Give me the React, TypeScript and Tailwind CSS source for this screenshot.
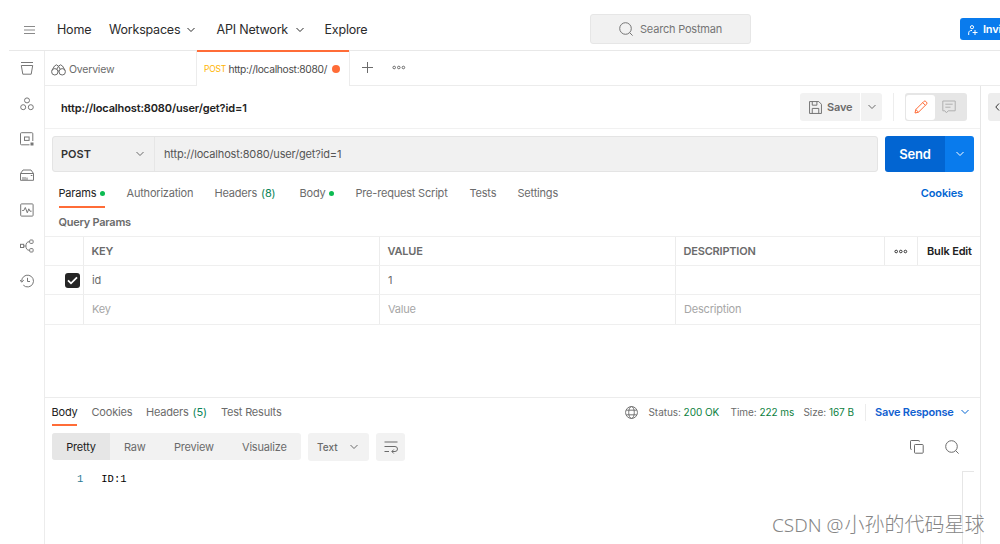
import type { ReactNode } from "react";
import clsx from "clsx";

type IconProps = { size?: number; className?: string; children: ReactNode };

function Icon({ size = 14, className, children }: IconProps) {
  return (
    <svg
      width={size}
      height={size}
      viewBox="0 0 14 14"
      fill="none"
      stroke="currentColor"
      strokeWidth="1"
      className={clsx("block shrink-0", className)}
    >
      {children}
    </svg>
  );
}

function Chevron({ className }: { className?: string }) {
  return (
    <svg width="8" height="6" viewBox="0 0 8 6" fill="none" stroke="currentColor" className={clsx("block shrink-0", className)}>
      <path d="M0.5 1 4 4.5 7.5 1" />
    </svg>
  );
}

function Dots({ className }: { className?: string }) {
  return (
    <svg width="14" height="5" viewBox="0 0 14 5" fill="none" stroke="currentColor" className={clsx("block shrink-0", className)}>
      <circle cx="2.2" cy="2.5" r="1.3" />
      <circle cx="6.8" cy="2.5" r="1.3" />
      <circle cx="11.4" cy="2.5" r="1.3" />
    </svg>
  );
}

function SearchIcon({ className }: { className?: string }) {
  return (
    <Icon className={className}>
      <circle cx="6.5" cy="6.5" r="5.8" />
      <path d="m10.6 10.6 3 3" />
    </Icon>
  );
}

const sidebar = [
  // collections
  <Icon>
    <path d="M1 1.5h12M1.300 4.500h11.400l-1.500 8.700H2.800z" />
  </Icon>,
  // apis
  <Icon>
    <circle cx="7" cy="3.4" r="2.5" />
    <circle cx="3.2" cy="10.2" r="2.5" />
    <circle cx="10.8" cy="10.2" r="2.5" />
  </Icon>,
  // environments
  <Icon>
    <path d="M9.5 12.8H1.5a1 1 0 0 1-1-1V1.7a1 1 0 0 1 1-1h10.3a1 1 0 0 1 1 1V9" />
    <rect x="4.5" y="5" width="4.6" height="3.4" />
    <rect x="11" y="11" width="2" height="2" fill="currentColor" />
  </Icon>,
  // mock servers
  <Icon>
    <path d="M.5 5.5 3 2h8l2.500 3.500M.5 5.500h13v6.800H.5zM3 9v3M5 9v3M7 9.500v2.500M10.800 7.500h1.600" />
  </Icon>,
  // monitors
  <Icon>
    <rect x=".7" y=".9" width="12.4" height="12.2" rx=".8" />
    <path d="M2.2 7.5h1.6l1.5-3 2 5.3 1.5-4 1.2 2.4h1.6" />
  </Icon>,
  // flows
  <Icon>
    <rect x=".5" y="5.3" width="3.2" height="3.2" />
    <rect x="9.7" y="1" width="3.4" height="3.4" rx=".8" />
    <rect x="9.7" y="9.6" width="3.4" height="3.4" rx=".8" />
    <path d="M3.7 7h2M9.5 2.7C7 2.7 5.9 4.3 5.9 7s1.1 4.3 3.6 4.3" />
  </Icon>,
  // history
  <Icon>
    <path d="M1.7 7.5A5.9 5.9 0 1 1 3.3 11.1M0 6l1.7 2.2L3.8 6.2M7.5 3.8V7.5H10" />
  </Icon>,
];

const requestTabs = [
  { name: "Params", width: "w-[68px]", dot: true, active: true },
  { name: "Authorization", width: "w-[88px]" },
  { name: "Headers", width: "w-[85px]", count: "(8)" },
  { name: "Body", width: "w-[56px]", dot: true },
  { name: "Pre-request Script", width: "w-[114px]" },
  { name: "Tests", width: "w-[48px]" },
  { name: "Settings", width: "w-[60px]" },
];

const responseTabs = [
  { name: "Body", width: "w-[40px]", active: true },
  { name: "Cookies", width: "w-[54.5px]" },
  { name: "Headers", width: "w-[75px]", count: "(5)" },
  { name: "Test Results", width: "w-[80px]" },
];

function Header() {
  return (
    <header className="flex h-[51px] shrink-0 items-start border-b border-[#e8e8e8] text-[12.5px] text-[#2b2b2b]">
      <div className="flex h-[58px] w-[48px] shrink-0 items-center pl-[15px] text-[#8a8a8a]">
        <svg width="11" height="8" viewBox="0 0 11 8" stroke="currentColor" className="mt-px">
          <path d="M0 .5h11M0 4h11M0 7.5h11" />
        </svg>
      </div>
      <nav className="flex h-[59px] w-[533px] shrink-0 items-center">
        <span className="w-[52px]">Home</span>
        <span className="w-[78px]">Workspaces</span>
        <Chevron className="mr-[21.5px]" />
        <span className="w-[79px]">API Network</span>
        <Chevron className="mr-[21px]" />
        <span>Explore</span>
      </nav>
      <div className="mt-[14px] flex h-[30px] w-[161px] shrink-0 items-center rounded-[3px] border border-[#e6e6e6] bg-[#f1f1f1] pb-px pl-[28px] text-[11px] text-[#757575]">
        <SearchIcon className="mr-[7px]" />
        Search Postman
      </div>
      <button className="mt-[18px] ml-[209px] flex h-[22px] w-[70px] shrink-0 items-center rounded-[3px] bg-[#097bed] pl-[8px] text-[11px] font-semibold text-white">
        <svg width="10" height="10" viewBox="0 0 10 10" fill="none" stroke="currentColor" className="mt-px mr-[5px]">
          <circle cx="4" cy="2.2" r="1.6" />
          <path d="M.7 10V7.8C.7 6.2 2 5.5 4 5.5M7 5v5M4.6 7.5H9.5" />
        </svg>
        Invite
      </button>
    </header>
  );
}

function TabBar() {
  return (
    <div className="flex h-[35px] text-[10.5px] text-[#6b6b6b]">
      <div className="flex w-[152px] items-center border-r border-b border-[#ececec] pt-[3px] pl-[6px]">
        <svg width="15" height="12" viewBox="0 0 15 12" fill="none" stroke="currentColor" className="mr-[3px]">
          <circle cx="3.8" cy="7.8" r="3.2" />
          <circle cx="11.2" cy="7.8" r="3.2" />
          <path d="M.9 6.500 3.500 2 5.500.8 7.500 2.200 9.500.8l2 1.200 2.600 4.500M7.500 2.200 5.800 5.300M7.500 2.200l1.700 3.100M6.800 7h1.400" />
        </svg>
        Overview
      </div>
      <div className="-mt-px flex w-[152px] items-center border-t-2 border-[#ff6c37] pl-[7px] text-[#4a4a4a]">
        <span className="w-[24.5px] text-[8.5px] text-[#ffb400]">POST</span>
        <span className="w-[103px] text-[10.25px] tracking-[-0.3px] whitespace-nowrap">http://localhost:8080/</span>
        <span className="size-[8px] rounded-full bg-[#ff6c37]" />
      </div>
      <div className="flex flex-1 items-start border-b border-l border-[#ececec] pt-[11px] pl-[12px]">
        <svg width="11" height="11" viewBox="0 0 11 11" stroke="currentColor" className="mr-[19px]">
          <path d="M5.5 0v11M0 5.5h11" />
        </svg>
        <Dots className="mt-[3px]" />
      </div>
    </div>
  );
}

function TitleRow() {
  return (
    <div className="flex h-[43px] items-center border-b border-[#f1f1f1] pl-[16px] text-[11px]">
      <span className="w-[739px] pt-px font-semibold tracking-[-0.13px] text-[#212121]">http://localhost:8080/user/get?id=1</span>
      <button className="flex h-[28px] w-[60px] items-center rounded-l-[3px] bg-[#f2f2f2] pl-[9px] font-semibold text-[#6b6b6b]">
        <Icon size={13} className="mr-[5px]">
          <path d="M.6.6H10.5L13.4 3.5V13.4H.6zM3.5 13.4V8H10.5V13.4M3.5.6V4.5H8.5V.6" />
        </Icon>
        Save
      </button>
      <button className="ml-px flex h-[28px] w-[21px] items-center justify-center rounded-r-[3px] bg-[#f2f2f2] text-[#6b6b6b]">
        <Chevron />
      </button>
      <div className="ml-[11px] h-[28px] w-px bg-[#ededed]" />
      <div className="ml-[11px] flex h-[28px] w-[62px] items-center rounded-[3px] bg-[#e6e6e6] p-px">
        <div className="flex h-[25px] w-[29px] items-center justify-center rounded-[3px] bg-white text-[#ff6c37]">
          <Icon>
            <path d="M1 13 1.8 9.5 9.8 1.5a1.5 1.5 0 0 1 2.1 0l.6.6a1.5 1.5 0 0 1 0 2.1L4.5 12.2zM8.7 2.6l2.7 2.7M1.8 9.5l2.7 2.7" />
          </Icon>
        </div>
        <div className="flex flex-1 items-center justify-center pr-[3px] text-[#b0b0b0]">
          <Icon>
            <path d="M.8 1h12.4v9.8H6.2l-1.8 2-1.5-2H.8zM3.3 4.2h7.4M3.3 7.2h5.2" />
          </Icon>
        </div>
      </div>
    </div>
  );
}

function RequestBar() {
  return (
    <div className="mt-[7px] flex h-[36px] pl-[7px] text-[11px]">
      <div className="flex w-[826px] shrink-0 items-center rounded-[3px] border border-[#e4e4e4] bg-[#f1f1f1]">
        <div className="flex h-full w-[102px] items-center border-r border-[#e6e6e6] pl-[8px] font-semibold text-[#333]">
          <span className="w-[75px] tracking-normal">POST</span>
          <Chevron className="text-[#6b6b6b]" />
        </div>
        <span className="pl-[9px] tracking-[-0.16px] text-[#555]">http://localhost:8080/user/get?id=1</span>
      </div>
      <button className="ml-[7px] w-[60px] shrink-0 rounded-l-[3px] bg-[#0265d2] text-[13px] font-semibold text-white">Send</button>
      <button className="flex w-[29px] shrink-0 items-center justify-center rounded-r-[3px] bg-[#097bed] text-white">
        <Chevron />
      </button>
    </div>
  );
}

function RequestTabs() {
  return (
    <div className="flex h-[36px] items-start pl-[13.5px] text-[11px] text-[#6b6b6b]">
      {requestTabs.map((tab) => (
        <div key={tab.name} className={clsx("shrink-0 whitespace-nowrap", tab.width)}>
          <div
            className={clsx(
              "inline-flex h-[36px] items-center",
              tab.active ? "border-b-2 border-[#ff6c37] pt-[8px] text-[#212121]" : "pt-[6px]",
            )}
          >
            {tab.name}
            {tab.count && <span className="ml-[4px] text-[#0b8457]">{tab.count}</span>}
            {tab.dot && <span className="ml-[3.5px] size-[5px] rounded-full bg-[#0cbb52]" />}
          </div>
        </div>
      ))}
      <span className="mt-[13px] ml-auto pr-[17px] font-semibold tracking-[-0.15px] text-[#0265d2]">Cookies</span>
    </div>
  );
}

function ParamsTable() {
  const columns = "grid grid-cols-[38px_296px_296px_305px] border-b border-[#efefef]";
  const headCell = "flex items-center border-l border-[#ececec] pl-[7.5px]";
  const cell = "flex items-center border-l border-[#ececec] pl-[8px]";

  return (
    <div className="border-t border-[#efefef] text-[11px]">
      <div className={clsx(columns, "h-[29px] font-semibold text-[#6b6b6b]")}>
        <div />
        <div className={headCell}>KEY</div>
        <div className={headCell}>VALUE</div>
        <div className={headCell}>
          <span className="w-[200.5px] shrink-0">DESCRIPTION</span>
          <div className="flex h-full w-[34px] shrink-0 items-center justify-center border-x border-[#ececec] text-[#333]">
            <Dots />
          </div>
          <span className="pl-[9px] tracking-[-0.15px] whitespace-nowrap text-[#212121]">Bulk Edit</span>
        </div>
      </div>
      <div className={clsx(columns, "h-[29px] text-[#6b6b6b]")}>
        <div className="flex items-center pl-[19.5px]">
          <div className="flex size-[15px] shrink-0 items-center justify-center rounded-[3px] bg-[#262626] text-white">
            <svg width="11" height="9" viewBox="0 0 11 9" fill="none" stroke="currentColor" strokeWidth="1.8">
              <path d="M1 4.3 4 7.3 10 1.3" />
            </svg>
          </div>
        </div>
        <div className={cell}>id</div>
        <div className={cell}>1</div>
        <div className={cell} />
      </div>
      <div className={clsx(columns, "h-[30px] text-[#a6a6a6]")}>
        <div />
        <div className={clsx(cell, "pb-[2px]")}>Key</div>
        <div className={clsx(cell, "pb-[2px]")}>Value</div>
        <div className={clsx(cell, "pb-[2px]")}>Description</div>
      </div>
    </div>
  );
}

function ResponsePanel() {
  return (
    <section className="mt-[72px] flex flex-1 flex-col border-t border-[#ececec] text-[11px] text-[#6b6b6b]">
      <div className="flex h-[28px] items-start pl-[6.5px]">
        {responseTabs.map((tab) => (
          <div key={tab.name} className={clsx("shrink-0 whitespace-nowrap", tab.width)}>
            <div
              className={clsx(
                "inline-flex h-[28px] items-center",
                tab.active && "border-b-2 border-[#ff6c37] pt-[2px] text-[#212121]",
              )}
            >
              {tab.name}
              {tab.count && <span className="ml-[4px] text-[#0b8457]">{tab.count}</span>}
            </div>
          </div>
        ))}
        <div className="ml-auto flex h-[28px] items-center text-[10px] tracking-[-0.05px] whitespace-nowrap">
          <Icon size={13} className="mr-[11px]">
            <circle cx="7" cy="7" r="6.4" />
            <ellipse cx="7" cy="7" rx="3" ry="6.4" />
            <path d="M1.3 4.5h11.4M1.3 9.5h11.4" />
          </Icon>
          <span className="w-[82px]">
            Status: <span className="text-[#0b8040]">200 OK</span>
          </span>
          <span className="w-[73px]">
            Time: <span className="text-[#0b8040]">222 ms</span>
          </span>
          <span className="w-[61px]">
            Size: <span className="text-[#0b8040]">167 B</span>
          </span>
          <div className="mr-[9.5px] h-[17px] w-px bg-[#ececec]" />
          <span className="w-[86px] text-[11px] font-semibold tracking-[-0.2px] text-[#1060d0]">Save Response</span>
          <Chevron className="mr-[11px] text-[#0265d2]" />
        </div>
      </div>

      <div className="mt-[7px] flex h-[28px] items-start pl-[7px]">
        <div className="flex h-[27px] w-[249px] items-center overflow-hidden rounded-[3px] bg-[#f2f2f2]">
          <span className="flex h-full w-[58px] items-center justify-center bg-[#e6e6e6] text-[#212121]">Pretty</span>
          <span className="w-[50px] pl-[14px]">Raw</span>
          <span className="w-[68px] pl-[14px]">Preview</span>
          <span className="pl-[14px]">Visualize</span>
        </div>
        <div className="ml-[7px] flex h-[28px] w-[61px] items-center rounded-[3px] bg-[#f2f2f2] pl-[9px] text-[10px] font-medium tracking-normal">
          <span className="w-[33px]">Text</span>
          <Chevron />
        </div>
        <div className="ml-[7px] flex h-[28px] w-[29px] items-center justify-center rounded-[3px] bg-[#f2f2f2]">
          <Icon>
            <path d="M.5 2h13M.5 6.5H11a2.5 2.5 0 0 1 0 5H8M9.8 9.5l-2 2 2 2M.5 11.5h4.5" />
          </Icon>
        </div>
        <div className="mt-[7px] ml-auto flex gap-[21px] pr-[21px]">
          <Icon>
            <rect x="4.5" y="4.5" width="8.7" height="8.7" rx=".8" />
            <path d="M1.7 9.3H1a.5.5 0 0 1-.5-.5V1.2A.7.7 0 0 1 1.2.5h7.6a.5.5 0 0 1 .5.5v.7" />
          </Icon>
          <SearchIcon />
        </div>
      </div>

      <div className="mt-[10px] flex flex-1">
        <pre className="pt-px pl-[32px] font-['Liberation_Mono',monospace] text-[10.5px] leading-[14px] tracking-normal text-black">
          <span className="text-[#2b7a94]">1</span>
          <span className="ml-[18px]">ID:1</span>
        </pre>
        <div className="mr-[6px] ml-auto w-[12px] border-t border-l border-[#e6e6e6]" />
      </div>
    </section>
  );
}

export default function App() {
  return (
    <div className="relative flex h-[544px] w-[1000px] flex-col overflow-hidden bg-white pl-[9px] font-['Inter','Noto_Sans_CJK_SC',sans-serif] leading-[16px] tracking-[-0.2px]">
      <Header />
      <div className="flex flex-1">
        <aside className="flex w-[35px] shrink-0 flex-col items-center gap-[21.5px] pt-[10px] text-[#777]">
          {sidebar.map((icon, i) => (
            <div key={i}>{icon}</div>
          ))}
        </aside>
        <div className="flex w-[956px] shrink-0 flex-col border-l border-[#ececec]">
          <TabBar />
          <div className="flex flex-1">
            <main className="flex w-[936px] shrink-0 flex-col border-r border-[#e6e6e6]">
              <TitleRow />
              <RequestBar />
              <RequestTabs />
              <div className="flex h-[28px] items-center pl-[13.5px] text-[11px] font-semibold tracking-[-0.25px] text-[#6b6b6b]">
                Query Params
              </div>
              <ParamsTable />
              <ResponsePanel />
            </main>
            <div className="mt-[7px] ml-[7px] flex h-[28px] w-[20px] shrink-0 items-center rounded-[3px] bg-[#ededed] pl-[7px] text-[#333]">
              <svg width="5" height="8" viewBox="0 0 5 8" fill="none" stroke="currentColor">
                <path d="M4 .5.8 4 4 7.5" />
              </svg>
            </div>
          </div>
        </div>
      </div>
      <div className="absolute top-[510px] left-[772px] text-[20px] leading-[28px] font-light tracking-normal whitespace-nowrap text-[#858585]">
        <span className="font-['Noto_Sans',sans-serif] text-[19px]">CSDN @</span>
        <span className="ml-px font-['Noto_Sans_CJK_SC',sans-serif]">小孙的代码星球</span>
      </div>
    </div>
  );
}
